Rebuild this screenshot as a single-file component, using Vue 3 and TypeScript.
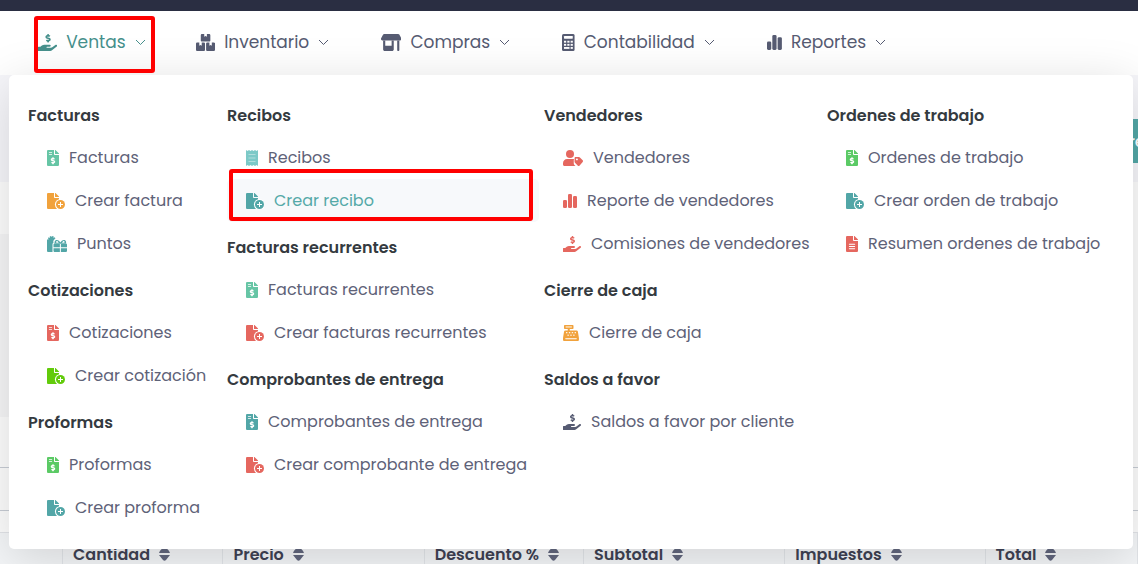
<script setup lang="ts">
type IconName =
  | 'hand' | 'boxes' | 'store' | 'calculator' | 'bars' | 'invoice'
  | 'add' | 'gifts' | 'receipt' | 'seller' | 'register' | 'report'

interface NavItem { label: string; icon: IconName; active?: boolean }
interface MenuLink { label: string; icon: IconName; tone: string; current?: boolean }
interface MenuGroup { title: string; links: MenuLink[] }

const viewBoxes: Record<IconName, string> = {
  hand: '0 0 576 512',
  boxes: '0 0 576 512',
  store: '0 0 616 512',
  calculator: '0 0 384 512',
  bars: '0 0 448 512',
  invoice: '0 0 384 512',
  add: '0 0 576 512',
  gifts: '0 0 640 512',
  receipt: '0 0 384 512',
  seller: '0 0 640 512',
  register: '0 0 512 512',
  report: '0 0 384 512',
}

const dollar =
  'M271.06,144.3l54.27,14.3a8.59,8.59,0,0,1,6.63,8.1c0,4.6-4.09,8.4-9.12,8.4h-35.6a30,30,0,0,1-11.19-2.2c-5.24-2.2-11.28-1.7-15.3,2l-19,17.5a11.68,11.68,0,0,0-2.25,2.66,11.42,11.42,0,0,0,3.88,15.74,83.77,83.77,0,0,0,34.51,11.5V240c0,8.8,7.83,16,17.37,16h17.37c9.55,0,17.38-7.2,17.38-16V222.4c32.93-3.6,57.84-31,53.5-63-3.15-23-22.46-41.3-46.56-47.7L282.68,97.4a8.59,8.59,0,0,1-6.63-8.1c0-4.6,4.09-8.4,9.12-8.4h35.6A30,30,0,0,1,332,83.1c5.23,2.2,11.28,1.7,15.3-2l19-17.5A11.31,11.31,0,0,0,368.47,61a11.43,11.43,0,0,0-3.84-15.78,83.82,83.82,0,0,0-34.52-11.5V16c0-8.8-7.82-16-17.37-16H295.37C285.82,0,278,7.2,278,16V33.6c-32.89,3.6-57.85,31-53.51,63C227.63,119.6,247,137.9,271.06,144.3Z'
const palm =
  'M565.27,328.1c-11.8-10.7-30.2-10-42.6,0L430.27,402a63.64,63.64,0,0,1-40,14H272a16,16,0,0,1,0-32h78.29c15.9,0,30.71-10.9,33.25-26.6a31.2,31.2,0,0,0,.46-5.46A32,32,0,0,0,352,320H192a117.66,117.66,0,0,0-74.1,26.29L71.4,384H16A16,16,0,0,0,0,400v96a16,16,0,0,0,16,16H372.77a64,64,0,0,0,40-14L564,377a32,32,0,0,0,1.28-48.9Z'
const sheet =
  'M377 105L279.1 7c-4.5-4.5-10.6-7-17-7H256v128h128v-6.1c0-6.3-2.5-12.4-7-16.9zM224 136V0H40C18 0 0 18 0 40v432c0 22 18 40 40 40h304c22 0 40-18 40-40V160H248c-13.2 0-24-10.8-24-24z'

const navItems: NavItem[] = [
  { label: 'Ventas', icon: 'hand', active: true },
  { label: 'Inventario', icon: 'boxes' },
  { label: 'Compras', icon: 'store' },
  { label: 'Contabilidad', icon: 'calculator' },
  { label: 'Reportes', icon: 'bars' },
]

const columns: MenuGroup[][] = [
  [
    {
      title: 'Facturas',
      links: [
        { label: 'Facturas', icon: 'invoice', tone: 'mint' },
        { label: 'Crear factura', icon: 'add', tone: 'orange' },
        { label: 'Puntos', icon: 'gifts', tone: 'teal' },
      ],
    },
    {
      title: 'Cotizaciones',
      links: [
        { label: 'Cotizaciones', icon: 'invoice', tone: 'red' },
        { label: 'Crear cotización', icon: 'add', tone: 'lime' },
      ],
    },
    {
      title: 'Proformas',
      links: [
        { label: 'Proformas', icon: 'invoice', tone: 'green' },
        { label: 'Crear proforma', icon: 'add', tone: 'teal' },
      ],
    },
  ],
  [
    {
      title: 'Recibos',
      links: [
        { label: 'Recibos', icon: 'receipt', tone: 'aqua' },
        { label: 'Crear recibo', icon: 'add', tone: 'teal', current: true },
      ],
    },
    {
      title: 'Facturas recurrentes',
      links: [
        { label: 'Facturas recurrentes', icon: 'invoice', tone: 'mint' },
        { label: 'Crear facturas recurrentes', icon: 'add', tone: 'red' },
      ],
    },
    {
      title: 'Comprobantes de entrega',
      links: [
        { label: 'Comprobantes de entrega', icon: 'invoice', tone: 'teal' },
        { label: 'Crear comprobante de entrega', icon: 'add', tone: 'red' },
      ],
    },
  ],
  [
    {
      title: 'Vendedores',
      links: [
        { label: 'Vendedores', icon: 'seller', tone: 'red' },
        { label: 'Reporte de vendedores', icon: 'bars', tone: 'red' },
        { label: 'Comisiones de vendedores', icon: 'hand', tone: 'red' },
      ],
    },
    {
      title: 'Cierre de caja',
      links: [{ label: 'Cierre de caja', icon: 'register', tone: 'orange' }],
    },
    {
      title: 'Saldos a favor',
      links: [{ label: 'Saldos a favor por cliente', icon: 'hand', tone: 'slate' }],
    },
  ],
  [
    {
      title: 'Ordenes de trabajo',
      links: [
        { label: 'Ordenes de trabajo', icon: 'invoice', tone: 'green' },
        { label: 'Crear orden de trabajo', icon: 'add', tone: 'teal' },
        { label: 'Resumen ordenes de trabajo', icon: 'report', tone: 'red' },
      ],
    },
  ],
]

const tableHeads = ['', 'Cantidad', 'Precio', 'Descuento %', 'Subtotal', 'Impuestos', 'Total']

// One sprite per icon, referenced by <use>.
const spriteNames = Object.keys(viewBoxes) as IconName[]
</script>

<template>
  <div class="page">
    <svg class="sprite" aria-hidden="true">
      <symbol v-for="name in spriteNames" :id="`i-${name}`" :key="name" :viewBox="viewBoxes[name]">
        <template v-if="name === 'hand'">
          <path :d="dollar" />
          <path :d="palm" />
        </template>
        <template v-else-if="name === 'boxes'">
          <path d="M184 0h64v84l40-22 40 22V0h64c22 0 40 14 40 36v156c0 18-14 32-32 32H176c-18 0-32-14-32-32V36c0-22 18-36 40-36z" />
          <path d="M40 256h60v96l36-20 36 20v-96h60c22 0 40 16 40 38v178c0 22-18 40-40 40H40c-22 0-40-18-40-40V294c0-22 18-38 40-38z" />
          <path d="M344 256h60v96l36-20 36 20v-96h60c22 0 40 16 40 38v178c0 22-18 40-40 40H344c-22 0-40-18-40-40V294c0-22 18-38 40-38z" />
        </template>
        <template v-else-if="name === 'store'">
          <path d="M100 0h416c16 0 28 6 36 18l60 110c14 28-2 64-36 64H40c-34 0-50-36-36-64L64 18C72 6 84 0 100 0z" />
          <path d="M64 192h64v160h192V192h64v272c0 26-22 48-48 48H112c-26 0-48-22-48-48zM488 192h64v288c0 18-14 32-32 32s-32-14-32-32z" />
        </template>
        <template v-else-if="name === 'calculator'">
          <rect width="384" height="512" rx="48" />
          <rect class="cut" x="60" y="60" width="264" height="84" rx="14" />
          <g class="cut">
            <rect x="60" y="204" width="66" height="56" /><rect x="160" y="204" width="66" height="56" /><rect x="260" y="204" width="66" height="56" />
            <rect x="60" y="298" width="66" height="56" /><rect x="160" y="298" width="66" height="56" /><rect x="260" y="298" width="66" height="56" />
            <rect x="60" y="392" width="166" height="56" /><rect x="260" y="392" width="66" height="56" />
          </g>
        </template>
        <template v-else-if="name === 'bars'">
          <rect x="0" y="224" width="128" height="256" rx="40" />
          <rect x="160" y="32" width="128" height="448" rx="40" />
          <rect x="320" y="96" width="128" height="384" rx="40" />
        </template>
        <template v-else-if="name === 'invoice'">
          <path :d="sheet" />
          <rect class="cut" x="60" y="60" width="104" height="30" rx="10" />
          <rect class="cut" x="60" y="124" width="104" height="30" rx="10" />
          <path class="cut" :d="dollar" transform="translate(-82 228) scale(.9)" />
        </template>
        <template v-else-if="name === 'report'">
          <path :d="sheet" />
          <rect class="cut" x="92" y="248" width="200" height="32" rx="12" />
          <rect class="cut" x="92" y="318" width="200" height="32" rx="12" />
          <rect class="cut" x="92" y="388" width="200" height="32" rx="12" />
        </template>
        <template v-else-if="name === 'add'">
          <path :d="sheet" />
          <circle class="cut" cx="432" cy="368" r="178" />
          <circle cx="432" cy="368" r="144" />
          <path class="cut" d="M416 288h32v64h64v32h-64v64h-32v-64h-64v-32h64z" />
        </template>
        <template v-else-if="name === 'gifts'">
          <path d="M40 100h32L30 76l20-34 44 20L88 18l42-16 22 32 22-32 42 16-10 44 44-20 20 34-42 24h20c-42 26-56 70-40 116-20 8-32 26-32 48v248H40c-22 0-40-18-40-40V140c0-22 18-40 40-40z" />
          <path fill-rule="evenodd" d="M248 240h164v118H208v-78c0-22 18-40 40-40zm196 0h156c22 0 40 18 40 40v78H444zM208 390h204v122H248c-22 0-40-18-40-40zm236 0h196v82c0 22-18 40-40 40H444zM256 248c-34-60 0-124 58-124 52 0 84 36 114 82 30-46 62-82 114-82 58 0 92 64 58 124zm52-32h68c-32-54-58-60-72-52-16 10-14 40 4 52zm172 0h68c18-12 20-42 4-52-14-8-40-2-72 52z" />
        </template>
        <template v-else-if="name === 'receipt'">
          <path d="M0 0l48 34L96 0l48 34L192 0l48 34L288 0l48 34L384 0v512l-48-34-48 34-48-34-48 34-48-34-48 34-48-34L0 512z" />
          <g class="cut" opacity=".4">
            <rect x="80" y="128" width="224" height="32" /><rect x="80" y="240" width="224" height="32" /><rect x="80" y="352" width="224" height="32" />
          </g>
        </template>
        <template v-else-if="name === 'seller'">
          <circle cx="224" cy="128" r="128" />
          <path d="M134 288h180c18 0 30 4 42 10-8 12-12 24-12 40v84c0 22 8 38 22 54l34 36H48c-26 0-48-22-48-48v-42c0-74 60-134 134-134z" />
          <path fill-rule="evenodd" d="M404 224h104c14 0 26 6 34 14l88 92c14 14 14 36 0 50L526 500c-14 16-36 16-50 0l-92-90c-10-10-14-20-14-34V258c0-20 14-34 34-34zm42 46c-18 0-32 14-32 30s14 30 32 30 30-14 30-30-14-30-30-30z" />
        </template>
        <template v-else-if="name === 'register'">
          <path d="M56 0h256c14 0 24 10 24 24v80c0 14-10 24-24 24H216v48h218c22 0 38 12 42 34l34 202v60c0 22-18 40-40 40H40c-22 0-40-18-40-40v-60l34-202c4-22 20-34 42-34h76v-48H56c-14 0-24-10-24-24V24C32 10 42 0 56 0z" />
          <g class="cut">
            <rect x="84" y="48" width="200" height="30" />
            <rect x="96" y="228" width="44" height="36" /><rect x="188" y="228" width="44" height="36" /><rect x="280" y="228" width="44" height="36" /><rect x="372" y="228" width="44" height="36" />
            <rect x="142" y="308" width="44" height="36" /><rect x="234" y="308" width="44" height="36" /><rect x="326" y="308" width="44" height="36" />
            <rect x="72" y="420" width="368" height="32" rx="12" />
          </g>
        </template>
      </symbol>
    </svg>

    <div class="topbar"></div>
    <header class="header">
      <nav class="nav" aria-label="Principal">
        <button
          v-for="item in navItems"
          :key="item.label"
          type="button"
          class="nav-item"
          :class="{ active: item.active }"
          :aria-expanded="!!item.active"
        >
          <svg class="nav-icon" :viewBox="viewBoxes[item.icon]" aria-hidden="true"><use :href="`#i-${item.icon}`" /></svg>
          <span>{{ item.label }}</span>
          <svg class="chevron" viewBox="0 0 11 7" aria-hidden="true"><path d="M1 1l4.500 4.500L10 1" /></svg>
          <span v-if="item.active" class="marker marker-nav"></span>
        </button>
      </nav>
    </header>

    <div class="menu">
      <div v-for="(groups, c) in columns" :key="c" class="menu-column">
        <section v-for="group in groups" :key="group.title" class="group">
          <h2>{{ group.title }}</h2>
          <ul>
            <li v-for="link in group.links" :key="link.label">
              <a href="#" class="link" :class="{ current: link.current }">
                <svg class="link-icon" :class="link.tone" :viewBox="viewBoxes[link.icon]" aria-hidden="true"><use :href="`#i-${link.icon}`" /></svg>
                <span>{{ link.label }}</span>
                <span v-if="link.current" class="marker marker-link"></span>
              </a>
            </li>
          </ul>
        </section>
      </div>
    </div>

    <main>
      <div class="toolbar"><button type="button" class="create">Crear</button></div>
      <div class="summary"></div>
      <div class="details"></div>
      <div class="filters"><div class="field"></div></div>
      <table class="lines">
        <colgroup>
          <col v-for="n in tableHeads.length" :key="n" :class="`col-${n}`" />
        </colgroup>
        <thead>
          <tr>
            <th v-for="head in tableHeads" :key="head" scope="col">
              <span v-if="head" class="head">
                {{ head }}
                <svg class="sort" viewBox="0 0 11 13" aria-hidden="true"><path d="M0 5C1 2 3 0 5.500 0S10 2 11 5zM0 7h11L7 12Q5.500 13.500 4 12z" /></svg>
              </span>
            </th>
          </tr>
        </thead>
      </table>
    </main>
  </div>
</template>

<style>
body {
  margin: 0;
  overflow: hidden;
}
</style>

<style scoped>
.page {
  position: relative;
  min-height: 100vh;
  overflow: hidden;
  background: #fdfdfd;
  color: #5e6278;
  font-family: Poppins, Inter, "Open Sans", sans-serif;
  font-size: 16px;
}

.sprite {
  position: absolute;
  width: 0;
  height: 0;
}

.cut {
  fill: #fff;
}

.topbar {
  position: relative;
  z-index: 3;
  height: 11px;
  background: #2a2e42;
}

.header {
  display: grid;
  grid-template-columns: minmax(0, 885fr) minmax(0, 253fr);
  height: 64px;
  background: #fff;
}

.nav {
  display: grid;
  grid-template-columns:
    minmax(0, 158fr) minmax(0, 185fr) minmax(0, 181fr)
    minmax(0, 205fr) minmax(0, 118fr);
  padding-left: 38px;
  overflow: hidden;
}

.nav-item {
  position: relative;
  display: flex;
  align-items: center;
  justify-content: flex-start;
  gap: 9px;
  padding: 0 0 2px;
  border: 0;
  background: none;
  color: #565b72;
  font: inherit;
  font-size: 17px;
  white-space: nowrap;
}

.nav-item.active {
  color: #46908c;
}

.nav-icon {
  flex: none;
  width: auto;
  height: 17px;
  fill: currentColor;
}

.chevron {
  flex: none;
  width: 11px;
  height: 7px;
  fill: none;
  stroke: currentColor;
}

.marker {
  position: absolute;
  z-index: 3;
  border: 4px solid #f00;
  border-radius: 3px;
  pointer-events: none;
}

.marker-nav {
  inset: 5px 41px 2px -4px;
}

.marker-link {
  inset: -10px 6px 1px 2px;
}

.menu {
  position: absolute;
  z-index: 2;
  top: 75px;
  right: 5px;
  left: 9px;
  display: grid;
  grid-template-columns:
    minmax(0, 194fr) minmax(0, 312fr)
    minmax(0, 278fr) minmax(0, 287fr);
  gap: 5px;
  box-sizing: border-box;
  padding: 22px 19px 20px;
  border-radius: 5px;
  background: #fff;
  box-shadow: 0 10px 50px rgba(0, 0, 0, 0.15);
}

.group + .group {
  margin-top: 7px;
}

h2 {
  margin: 0 0 2px;
  color: #343a40;
  font-size: 16px;
  font-weight: 600;
  line-height: 37px;
  white-space: nowrap;
}

ul {
  margin: 0;
  padding: 0;
  list-style: none;
}

.link {
  position: relative;
  display: flex;
  align-items: center;
  gap: 10px;
  height: 43px;
  padding-left: 19px;
  border-radius: 5px;
  color: #5e6278;
  text-decoration: none;
  white-space: nowrap;
}

.link.current {
  background: #f7f9fb;
  color: #55a9a8;
}

.link-icon {
  flex: none;
  width: auto;
  height: 16px;
}

.mint { fill: #66c5a5; }
.orange { fill: #f1a23c; }
.teal { fill: #52a6a7; }
.red { fill: #e5675f; }
.lime { fill: #62cb0b; }
.green { fill: #5bca65; }
.aqua { fill: #7cc9c7; }
.slate { fill: #565b72; }

.toolbar {
  display: flex;
  align-items: flex-start;
  justify-content: flex-end;
  box-sizing: border-box;
  height: 107px;
  padding-top: 44px;
  background: #f6f6fa;
}

.create {
  height: 44px;
  width: 80px;
  margin-right: -41px;
  padding: 0;
  border: 0;
  border-radius: 5px;
  background: #53a8a7;
  color: #fff;
  font: inherit;
  font-weight: 500;
}

.summary {
  height: 52px;
}

.details {
  height: 183px;
  margin-right: 16px;
  background: #f6f6f7;
}

.filters {
  box-sizing: border-box;
  height: 116px;
  padding: 50px 0 22px;
  border-bottom: 1px solid #e2e4e8;
}

.field {
  box-sizing: border-box;
  height: 44px;
  border: solid #c8cdd5;
  border-width: 1px 0;
}

.lines {
  width: 100%;
  table-layout: fixed;
  border-collapse: collapse;
  background: #f4f6f8;
}

.col-1 { width: 5.5%; }
.col-2 { width: 14.1%; }
.col-3 { width: 17.7%; }
.col-4 { width: 14%; }
.col-5 { width: 17.7%; }
.col-6 { width: 17.6%; }
.col-7 { width: 13.4%; }

th {
  height: 42px;
  padding: 0 10px;
  border-right: 1px solid #e3e6ea;
  color: #3f4254;
  font-size: 16px;
  font-weight: 600;
  text-align: left;
  white-space: nowrap;
}

.head {
  display: flex;
  align-items: center;
  gap: 9px;
}

.sort {
  width: 11px;
  height: 13px;
  fill: #62677e;
}
</style>
